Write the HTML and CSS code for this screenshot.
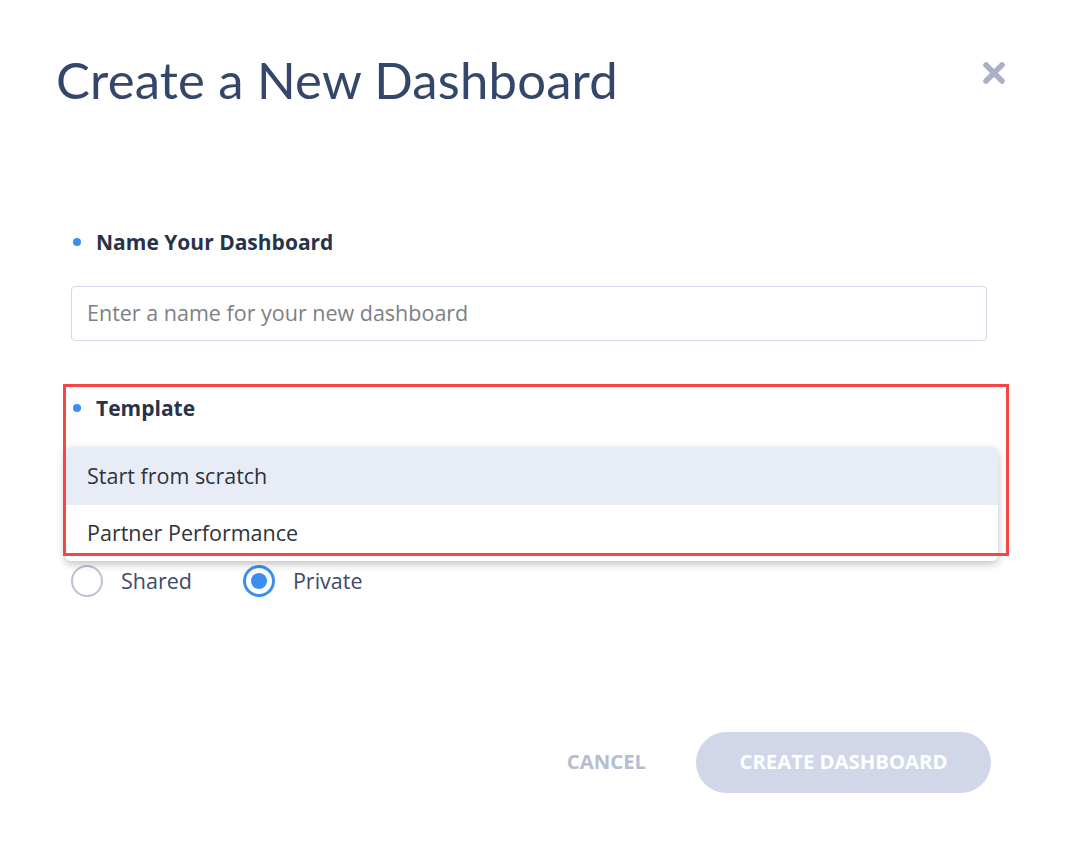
FILE: index.html
```html
<!DOCTYPE html>
<html>
<head>
<meta charset="utf-8">
<link rel="stylesheet" href="styles.css">
</head>
<body>
<div class="modal">
  <div class="header">
    <h1 class="title">Create a New Dashboard</h1>
    <button class="close" aria-label="Close">
      <svg width="24" height="24" viewBox="0 0 24 24"><path d="M4 4 L20 20 M20 4 L4 20" stroke="#a9b0c8" stroke-width="5.5" stroke-linecap="round"/></svg>
    </button>
  </div>

  <div class="field name-field">
    <div class="label"><span class="dot"></span>Name Your Dashboard</div>
    <div class="input">Enter a name for your new dashboard</div>
  </div>

  <div class="field template-field">
    <div class="label"><span class="dot"></span>Template</div>
    <div class="select-space"></div>
    <ul class="menu">
      <li class="item active">Start from scratch</li>
      <li class="item">Partner Performance</li>
    </ul>
    <div class="highlight"></div>
  </div>

  <div class="radios">
    <label class="radio"><span class="circle"></span>Shared</label>
    <label class="radio checked"><span class="circle"></span>Private</label>
  </div>

  <div class="actions">
    <button class="cancel">CANCEL</button>
    <button class="create">CREATE DASHBOARD</button>
  </div>
</div>
</body>
</html>
```

FILE: styles.css
```css
* { box-sizing: border-box; }
html, body { margin: 0; padding: 0; background: #ffffff; }
body { font-family: "Open Sans", "Lato", sans-serif; width: 1066px; height: 843px; overflow: hidden; }

.modal { padding: 0 0 0 56px; width: 1066px; }

.header { display: flex; justify-content: space-between; align-items: flex-start; padding-top: 52px; padding-right: 60px; }
.title { margin: 0; font-family: "Lato", sans-serif; font-weight: 400; font-size: 50.8px; line-height: 56px; color: #34476a; letter-spacing: 0.2px; }
.close { border: 0; background: none; padding: 0; margin-top: 9px; width: 24px; height: 24px; cursor: pointer; }
.close svg { display: block; }

.field { margin-left: 15px; width: 916px; }
.name-field { margin-top: 122px; }
.label { display: flex; align-items: center; font-weight: 700; font-size: 21px; line-height: 24px; color: #28334a; }
.dot { width: 8px; height: 8px; border-radius: 50%; background: #3a8ef0; margin: 0 15px 0 2px; }
.input { margin-top: 32px; height: 55px; border: 1px solid #d3d7e7; border-radius: 4px; padding: 0 15px 3px; display: flex; align-items: center; font-size: 21.5px; color: #7d7f84; }

.template-field { position: relative; margin-top: 55px; }
.select-space { height: 145px; }
.menu { position: absolute; left: -6px; top: 51px; width: 933px; margin: 0; padding: 0; list-style: none; background: #fff; border-radius: 6px; box-shadow: 0 3px 8px rgba(0,0,0,0.25); overflow: hidden; }
.item { display: flex; align-items: center; padding: 0 0 2px 22px; font-size: 21.5px; color: #2f3339; }
.item.active { background: #e8ecf6; height: 58px; }
.item + .item { height: 56px; }
.highlight { position: absolute; left: -8px; top: -12px; width: 946px; height: 172px; border: 3px solid #f34646; pointer-events: none; }

.radios { display: flex; gap: 51px; margin-left: 15px; }
.radio { display: flex; align-items: center; font-size: 21.5px; line-height: 30px; color: #3d4a69; }
.circle { width: 32px; height: 32px; border-radius: 50%; border: 2.5px solid #bcc1d3; margin-right: 18px; display: flex; align-items: center; justify-content: center; }
.radio.checked .circle { border: 3px solid #3a8ef0; }
.radio.checked .circle::after { content: ""; width: 16px; height: 16px; border-radius: 50%; background: #3a8ef0; }

.actions { display: flex; justify-content: flex-end; align-items: center; gap: 50px; padding-right: 75px; margin-top: 135px; }
.cancel { border: 0; background: none; font-family: inherit; font-weight: 700; font-size: 20.3px; color: #b6bcd1; padding: 0 0 3px; }
.create { border: 0; background: #d1d7e9; color: #fff; font-family: inherit; font-weight: 700; font-size: 20.3px; width: 295px; height: 61px; border-radius: 31px; padding: 0 0 3px; }
```
